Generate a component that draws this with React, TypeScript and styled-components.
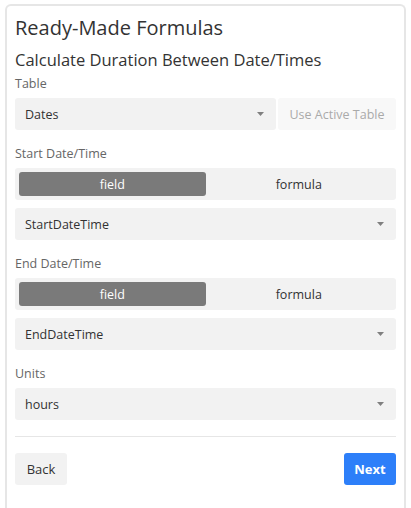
import React, { useState } from "react";
import styled, { createGlobalStyle } from "styled-components";

const GlobalStyle = createGlobalStyle`
  * { box-sizing: border-box; }
  body {
    margin: 0;
    background: #fff;
    font-family: "Open Sans", "Noto Sans", sans-serif;
    color: #333;
  }
`;

function Caret() {
  return (
    <svg width="7" height="4" viewBox="0 0 7 4">
      <path d="M0 0 L7 0 L3.5 4 Z" fill="#808080" />
    </svg>
  );
}

function Select({ value }: { value: string }) {
  return (
    <SelectBox>
      <span>{value}</span>
      <Caret />
    </SelectBox>
  );
}

function Toggle() {
  const [mode, setMode] = useState("field");
  return (
    <ToggleBar>
      <ToggleOption $active={mode === "field"} onClick={() => setMode("field")}>
        field
      </ToggleOption>
      <ToggleOption $active={mode === "formula"} onClick={() => setMode("formula")}>
        formula
      </ToggleOption>
    </ToggleBar>
  );
}

export default function App() {
  return (
    <>
      <GlobalStyle />
      <Card>
        <Title>Ready-Made Formulas</Title>
        <Subtitle>Calculate Duration Between Date/Times</Subtitle>

        <Label>Table</Label>
        <TableRow>
          <Select value="Dates" />
          <GhostButton>Use Active Table</GhostButton>
        </TableRow>

        <Label>Start Date/Time</Label>
        <Toggle />
        <Select value="StartDateTime" />

        <Label>End Date/Time</Label>
        <Toggle />
        <Select value="EndDateTime" />

        <Label>Units</Label>
        <Select value="hours" />

        <Divider />

        <Footer>
          <BackButton>Back</BackButton>
          <NextButton>Next</NextButton>
        </Footer>
      </Card>
    </>
  );
}

const Card = styled.div`
  margin: 4px 5px 0 5px;
  height: 504px;
  overflow: hidden;
  border: 2px solid #e6e6e6;
  border-bottom: none;
  border-radius: 6px 6px 0 0;
  padding: 7px 8px 0 8px;
  display: flex;
  flex-direction: column;
`;

const Title = styled.h1`
  margin: 0;
  font-size: 20px;
  font-weight: 400;
  line-height: 30px;
  color: #333;
`;

const Subtitle = styled.h2`
  margin: 5px 0 0 0;
  font-size: 16.5px;
  font-weight: 400;
  line-height: 24px;
  color: #333;
`;

const Label = styled.div`
  font-size: 12.5px;
  color: #666;
  line-height: 18px;
  margin: 15px 0 5px 0;

  h2 + & {
    margin-top: 3px;
  }
`;

const TableRow = styled.div`
  display: flex;
  gap: 2px;

  & > :first-child {
    flex: 1;
  }
`;

const SelectBox = styled.div`
  flex-shrink: 0;
  height: 32px;
  background: #f2f2f2;
  border-radius: 3px;
  padding: 0 12px 0 10px;
  display: flex;
  align-items: center;
  justify-content: space-between;
  font-size: 12.5px;
  color: #333;
  cursor: pointer;
`;

const GhostButton = styled.button`
  width: 118px;
  height: 32px;
  border: none;
  border-radius: 3px;
  background: #f8f8f8;
  color: #aaa;
  font-family: inherit;
  font-size: 12.5px;
  padding: 0;
`;

const ToggleBar = styled.div`
  flex-shrink: 0;
  height: 32px;
  background: #f2f2f2;
  border-radius: 3px;
  padding: 4px;
  display: flex;
  margin-bottom: 8px;
`;

const ToggleOption = styled.div<{ $active: boolean }>`
  flex: 1;
  display: flex;
  align-items: center;
  justify-content: center;
  border-radius: 3px;
  font-size: 12.5px;
  color: ${(p) => (p.$active ? "#fff" : "#333")};
  background: ${(p) => (p.$active ? "#7a7a7a" : "transparent")};
  cursor: pointer;
`;

const Divider = styled.hr`
  flex-shrink: 0;
  margin: 16px 0 16px 0;
  border: none;
  border-top: 1px solid #e6e6e6;
`;

const Footer = styled.div`
  display: flex;
  justify-content: space-between;
`;

const BaseButton = styled.button`
  width: 52px;
  height: 32px;
  border: none;
  border-radius: 3px;
  font-family: inherit;
  font-size: 13px;
  padding: 0;
  cursor: pointer;
`;

const BackButton = styled(BaseButton)`
  background: #f2f2f2;
  color: #333;
`;

const NextButton = styled(BaseButton)`
  background: #2d7ff9;
  color: #fff;
  font-weight: 700;
`;
